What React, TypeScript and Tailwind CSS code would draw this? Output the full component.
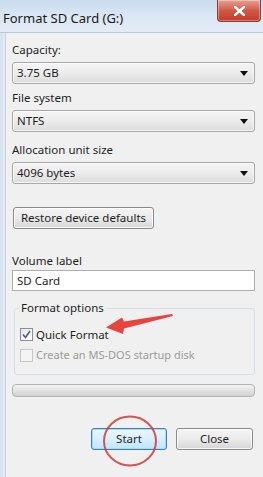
import React from "react";

const font = { fontFamily: '"Noto Sans", "Open Sans", sans-serif' };

function Combo({ value }: { value: string }) {
  return (
    <div className="flex h-[22px] items-center justify-between rounded-[3px] border border-[#a7a7a7] bg-gradient-to-b from-[#f4f4f4] via-[#ececec] to-[#dcdcdc] pl-[4px] pr-[6px] text-[11.5px] text-[#1e1e1e] shadow-[inset_0_0_0_1px_rgba(255,255,255,0.7)]">
      <span>{value}</span>
      <svg width="8" height="5" viewBox="0 0 8 5">
        <path d="M0 0 L8 0 L4 5 Z" fill="#111" />
      </svg>
    </div>
  );
}

function WinButton({
  label,
  className = "",
  primary = false,
}: {
  label: string;
  className?: string;
  primary?: boolean;
}) {
  return (
    <div
      className={
        "flex h-[22px] items-center justify-center rounded-[3px] border text-[11.5px] text-[#1e1e1e] " +
        (primary
          ? "border-[#3c7fb1] bg-gradient-to-b from-[#eaf6fd] via-[#d9f0fc] to-[#bee6fd] shadow-[inset_0_0_0_1px_#a8dcf6]"
          : "border-[#8a8a8a] bg-gradient-to-b from-[#f4f4f4] via-[#ebebeb] to-[#d6d6d6] shadow-[inset_0_0_0_1px_rgba(255,255,255,0.8)]") +
        " " +
        className
      }
    >
      {label}
    </div>
  );
}

export default function App() {
  return (
    <div className="relative h-[477px] w-[263px] overflow-hidden bg-[#f0f0f0]" style={font}>
      {/* Title bar */}
      <div className="flex h-[33px] items-start justify-between border-b border-[#b9c9da] bg-gradient-to-b from-[#c9dbee] via-[#dbe7f4] to-[#e3ecf6]">
        <span className="pl-[3px] pt-[9px] text-[13px] text-[#1a1a1a]">Format SD Card (G:)</span>
        <div className="mr-[2px] flex h-[22px] w-[44px] items-center justify-center rounded-b-[4px] border border-t-0 border-[#8a3b33] bg-gradient-to-b from-[#e8a193] via-[#cf5a47] to-[#c23a27] shadow-[inset_0_0_0_1px_rgba(255,255,255,0.35)]">
          <svg width="11" height="10" viewBox="0 0 11 10">
            <path d="M1 1 L10 9 M10 1 L1 9" stroke="#fff" strokeWidth="2.4" strokeLinecap="square" />
          </svg>
        </div>
      </div>

      {/* Body with left frame strip */}
      <div className="flex h-[444px]">
        <div className="w-[6px] shrink-0 border-r border-[#c8d2dc] bg-gradient-to-r from-[#d5e1ee] to-[#e4ebf3]" />
        <div className="flex flex-1 flex-col pl-[6px] pr-[8px] pt-[9px] text-[11.5px] text-[#1e1e1e]">
          <div className="h-[16px] leading-[16px]">Capacity:</div>
          <div className="mt-[4px]">
            <Combo value="3.75 GB" />
          </div>

          <div className="mt-[6px] h-[16px] leading-[16px]">File system</div>
          <div className="mt-[4px]">
            <Combo value="NTFS" />
          </div>

          <div className="mt-[10px] h-[16px] leading-[16px]">Allocation unit size</div>
          <div className="mt-[4px]">
            <Combo value="4096 bytes" />
          </div>

          <div className="mt-[23px] pl-[1px]">
            <WinButton label="Restore device defaults" className="w-[141px]" />
          </div>

          <div className="mt-[24px] h-[16px] leading-[16px]">Volume label</div>
          <div className="mt-[1px] flex h-[21px] items-center border border-[#abadb3] bg-white pl-[4px]">
            SD Card
          </div>

          {/* Format options group */}
          <div className="relative mt-[17px] ml-[2px] h-[67px] rounded-[3px] border border-[#d5dfe5]">
            <span className="absolute -top-[9px] left-[4px] bg-[#f0f0f0] px-[2px] leading-[16px]">
              Format options
            </span>
            <div className="mt-[17px] flex items-center pl-[5px]">
              <div className="flex h-[13px] w-[13px] items-center justify-center border border-[#8f8f8f] bg-gradient-to-br from-[#e6e6e6] to-[#ffffff]">
                <svg width="9" height="9" viewBox="0 0 9 9">
                  <path d="M1 4.5 L3.5 7.5 L8 1" fill="none" stroke="#4a5f8a" strokeWidth="1.6" />
                </svg>
              </div>
              <span className="ml-[3px] text-[11.5px]">Quick Format</span>
            </div>
            <div className="mt-[4px] flex items-center pl-[5px]">
              <div className="h-[13px] w-[13px] border border-[#c6c6c6] bg-[#f4f4f4]" />
              <span className="ml-[3px] text-[11px] text-[#9a9a9a]">Create an MS-DOS startup disk</span>
            </div>
          </div>

          {/* Progress bar */}
          <div className="mt-[9px] h-[13px] rounded-[4px] border border-[#b2b2b2] bg-gradient-to-b from-[#f3f3f3] via-[#e2e2e2] to-[#d2d2d2]" />

          <div className="mt-[31px] flex justify-end gap-[9px] pr-[2px]">
            <WinButton label="Start" primary className="w-[76px]" />
            <WinButton label="Close" className="w-[77px]" />
          </div>
        </div>
      </div>

      {/* Annotations: red arrow and circle */}
      <svg className="absolute left-0 top-0" width="263" height="477" viewBox="0 0 263 477">
        <path
          d="M172 314 L124 321.5 L122 317.5 L106 327.5 L123 334 L124 328.5 L173 316 Z"
          fill="#e8302b"
          opacity="0.9"
        />
        <ellipse
          cx="130"
          cy="441"
          rx="26"
          ry="24.5"
          fill="none"
          stroke="#cf3b38"
          strokeWidth="2"
          opacity="0.85"
        />
      </svg>
    </div>
  );
}
